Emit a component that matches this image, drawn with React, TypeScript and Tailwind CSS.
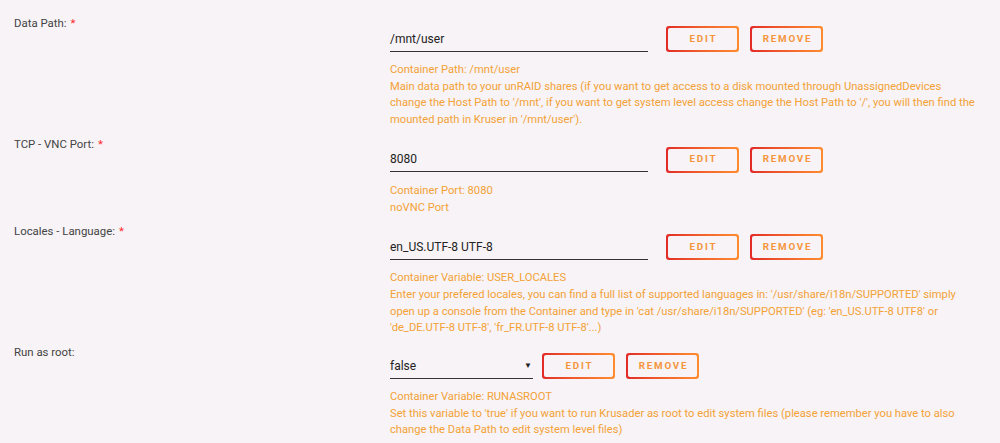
import React from "react";

interface Setting {
  label: string;
  required: boolean;
  value: string;
  select?: boolean;
  info: string;
  desc: string;
}

const settings: Setting[] = [
  {
    label: "Data Path:",
    required: true,
    value: "/mnt/user",
    info: "Container Path: /mnt/user",
    desc: "Main data path to your unRAID shares (if you want to get access to a disk mounted through UnassignedDevices change the Host Path to '/mnt', if you want to get system level access change the Host Path to '/', you will then find the mounted path in Kruser in '/mnt/user').",
  },
  {
    label: "TCP - VNC Port:",
    required: true,
    value: "8080",
    info: "Container Port: 8080",
    desc: "noVNC Port",
  },
  {
    label: "Locales - Language:",
    required: true,
    value: "en_US.UTF-8 UTF-8",
    info: "Container Variable: USER_LOCALES",
    desc: "Enter your prefered locales, you can find a full list of supported languages in: '/usr/share/i18n/SUPPORTED' simply open up a console from the Container and type in 'cat /usr/share/i18n/SUPPORTED' (eg: 'en_US.UTF-8 UTF8' or 'de_DE.UTF-8 UTF-8', 'fr_FR.UTF-8 UTF-8'...)",
  },
  {
    label: "Run as root:",
    required: false,
    value: "false",
    select: true,
    info: "Container Variable: RUNASROOT",
    desc: "Set this variable to 'true' if you want to run Krusader as root to edit system files (please remember you have to also change the Data Path to edit system level files)",
  },
];

function GradientButton({ children }: { children: React.ReactNode }) {
  return (
    <div className="w-[73px] h-[26px] rounded-[3px] bg-gradient-to-r from-[#e22828] to-[#ff8c2f] p-[2px]">
      <button className="w-full h-full rounded-[2px] bg-[#f7f3f6] text-[9.8px] font-bold tracking-[1.8px] text-[#f5953c] flex items-center justify-center pl-[2px]">
        {children}
      </button>
    </div>
  );
}

export default function App() {
  return (
    <main
      className="min-h-screen w-full bg-[#f7f3f6] pt-[15px]"
      style={{ fontFamily: "Roboto, 'Liberation Sans', sans-serif" }}
    >
      {settings.map((s) => (
        <div key={s.label} className="flex pb-[7px]">
          <div className="w-[390px] pl-[14px] text-[11.4px] leading-[16px] text-[#444]">
            {s.label}
            {s.required && <span className="text-[#ff2a2a] ml-[4px]">*</span>}
          </div>
          <div className={`w-[585px] ${s.select ? "pt-[9px]" : "pt-[11px]"}`}>
            <div className="flex items-center">
              {s.select ? (
                <div className="w-[143px] h-[26px] border-b border-[#333] flex items-center justify-between pr-[1px] text-[12px] text-[#222] mr-[9px]">
                  <span className="pt-[1px]">{s.value}</span>
                  <span className="text-[8px] text-[#222]">▼</span>
                </div>
              ) : (
                <div className="w-[258px] h-[25px] border-b border-[#333] flex items-center text-[12px] text-[#222] mr-[18px]">
                  {s.value}
                </div>
              )}
              <div className="flex gap-[11px]">
                <GradientButton>EDIT</GradientButton>
                <GradientButton>REMOVE</GradientButton>
              </div>
            </div>
            <div className="mt-[10px] text-[11.2px] leading-[16.7px] text-[#f3a236]">
              <div>{s.info}</div>
              <div>{s.desc}</div>
            </div>
          </div>
        </div>
      ))}
    </main>
  );
}
